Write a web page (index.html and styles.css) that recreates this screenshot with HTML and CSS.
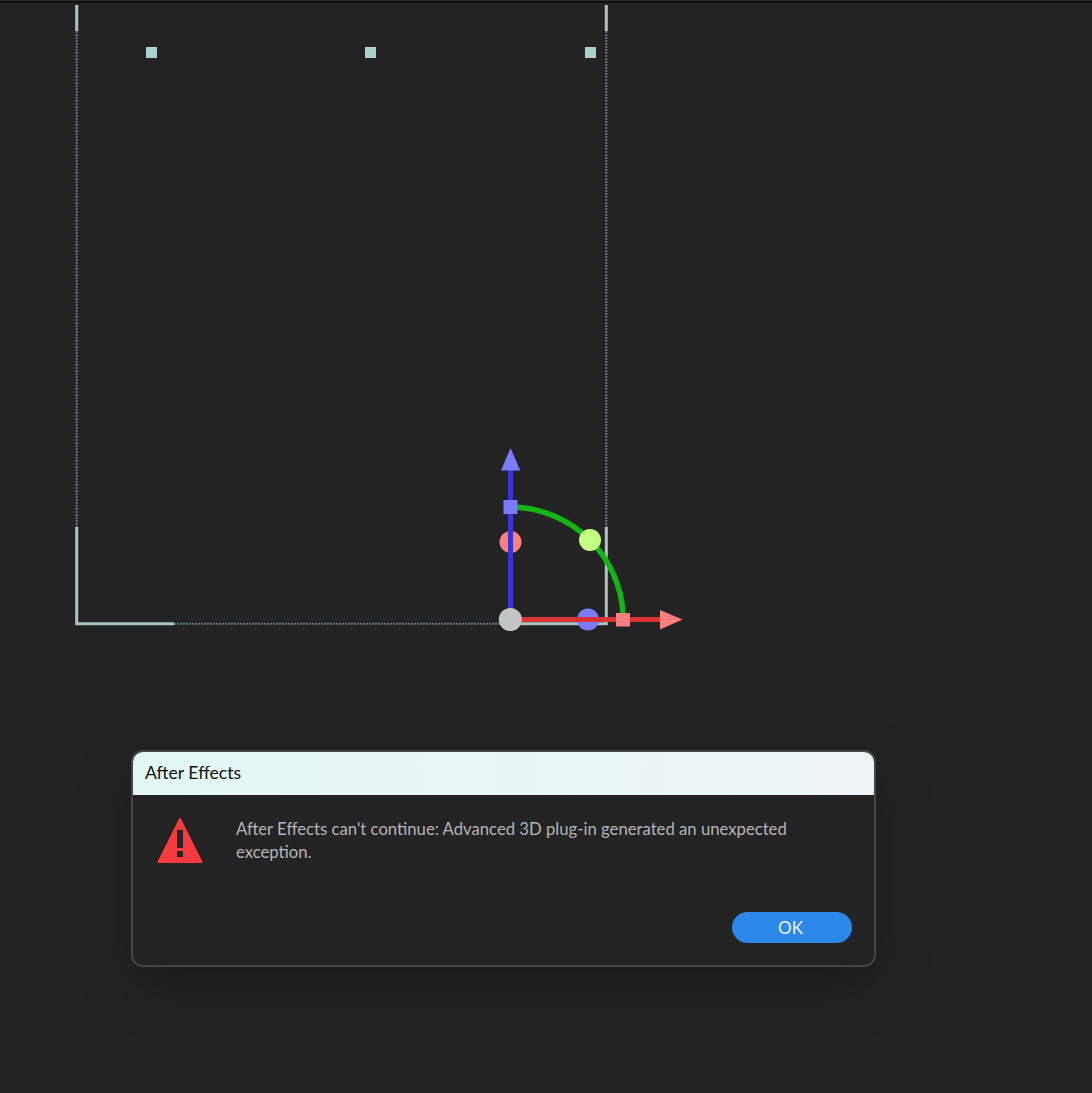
FILE: index.html
```html
<!DOCTYPE html>
<html lang="en">
<head>
    <meta charset="UTF-8">
    <meta name="viewport" content="width=device-width, initial-scale=1.0">
    <title>After Effects</title>
    <link rel="stylesheet" href="styles.css">
</head>
<body>
    <div class="top-strip"></div>

    <!-- composition view: frame + 3D gizmo -->
    <svg class="stage" width="1092" height="747" viewBox="0 3 1092 747">
        <g class="frame-thin">
            <path d="M76.7 31V527"/>
            <path d="M606.3 31V527"/>
            <path d="M174 623.7H606"/>
        </g>
        <g class="frame-thick">
            <path d="M76.7 5V31"/>
            <path d="M606.3 5V31"/>
            <path d="M76.7 527V623.7H174"/>
            <path d="M606.3 527V623.7H520"/>
        </g>
        <g class="frame-handle">
            <rect x="146" y="47" width="11" height="11"/>
            <rect x="365" y="47" width="11" height="11"/>
            <rect x="585" y="47" width="11" height="11"/>
        </g>

        <circle class="gizmo-red" cx="510.5" cy="542" r="11"/>
        <circle class="gizmo-blue" cx="588" cy="619.5" r="11"/>
        <path class="axis-green" d="M517 507.3A113 113 0 0 1 623 613"/>
        <path class="axis-blue" d="M510.5 470V612"/>
        <path class="axis-red" d="M518 619.5H662"/>
        <path class="gizmo-blue" d="M510.5 448L520.3 470.5H501Z"/>
        <path class="gizmo-red" d="M682.5 619.5L660 610V629.5Z"/>
        <rect class="gizmo-blue" x="503.5" y="500" width="14" height="14"/>
        <rect class="gizmo-red" x="616" y="613" width="14" height="13.5"/>
        <circle class="gizmo-lime" cx="590" cy="540" r="11"/>
        <circle class="gizmo-grey" cx="510.3" cy="619.5" r="11.5"/>
    </svg>

    <div class="dialog">
        <div class="dialog-title">After Effects</div>
        <div class="dialog-body">
            <svg class="warn-icon" width="46" height="46" viewBox="0 0 46 46">
                <path class="warn-fill" d="M23 1L44.5 44H1.5Z"/>
                <rect class="warn-mark" x="20" y="12" width="6" height="18"/>
                <rect class="warn-mark" x="20" y="33" width="6" height="6"/>
            </svg>
            <p class="dialog-msg">After Effects can't continue: Advanced 3D plug-in generated an unexpected exception.</p>
        </div>
        <div class="dialog-actions">
            <button class="ok-btn">OK</button>
        </div>
    </div>
</body>
</html>
```

FILE: styles.css
```css
html, body {
    margin: 0;
    padding: 0;
    background: #232323;
}
body {
    font-family: "Lato", "Noto Sans", sans-serif;
    overflow: hidden;
    height: 1093px;
}
.top-strip {
    box-sizing: border-box;
    height: 3px;
    background: #0f0f0f;
    border-top: 1px solid #2a2a2a;
}
.stage {
    display: block;
    fill: none;
}
.frame-thin path {
    stroke: #64797a;
    stroke-width: 2;
    stroke-dasharray: 2 1;
}
.frame-thick path {
    stroke: #a8c6c1;
    stroke-width: 3;
}
.frame-handle rect {
    fill: #a8d3ca;
}
.axis-green {
    stroke: #14b414;
    stroke-width: 5.5;
}
.axis-blue {
    stroke: #3535d8;
    stroke-width: 5;
}
.axis-red {
    stroke: #dd3333;
    stroke-width: 5;
}
.gizmo-blue {
    fill: #7b7bff;
}
.gizmo-red {
    fill: #ff7f7f;
}
.gizmo-lime {
    fill: #c3ff80;
}
.gizmo-grey {
    fill: #c4c4c4;
}
.dialog {
    box-sizing: border-box;
    display: flex;
    flex-direction: column;
    width: 745px;
    height: 217px;
    margin-left: 131px;
    background: #232323;
    border: 2px solid #454545;
    border-radius: 12px;
    overflow: hidden;
    box-shadow: 0 18px 55px rgba(0, 0, 0, 0.22);
}
.dialog-title {
    height: 43px;
    line-height: 41px;
    padding-left: 12px;
    font-size: 17.6px;
    color: #111;
    background: linear-gradient(90deg, #e2f8f4, #eef3f8);
}
.dialog-body {
    display: flex;
    gap: 33px;
    padding: 22px 60px 0 24px;
}
.warn-icon {
    flex: none;
    margin-top: 1px;
}
.warn-fill {
    fill: #f53b3f;
    stroke: #f53b3f;
    stroke-width: 2;
    stroke-linejoin: round;
}
.warn-mark {
    fill: #232323;
}
.dialog-msg {
    margin: 1px 0 0;
    font-size: 16.7px;
    line-height: 23px;
    color: #b4b4b4;
}
.dialog-actions {
    display: flex;
    justify-content: flex-end;
    margin-top: auto;
    padding: 0 22px 22px 0;
}
.ok-btn {
    width: 120px;
    height: 31px;
    padding: 0 3px 0 0;
    border: none;
    border-radius: 16px;
    background: #2b88e8;
    color: #eef6ff;
    font-family: inherit;
    font-size: 17px;
}
```
